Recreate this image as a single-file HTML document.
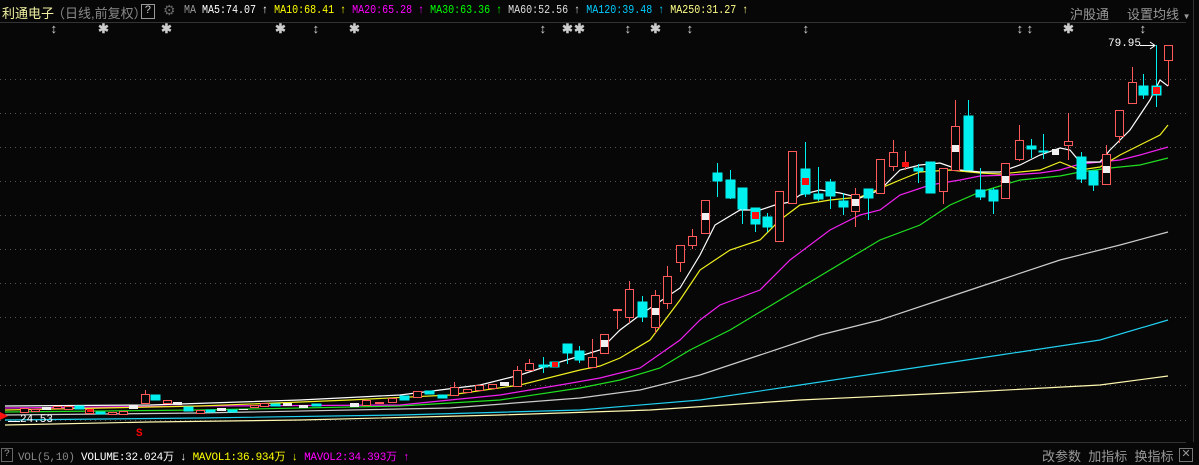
<!DOCTYPE html>
<html><head><meta charset="utf-8"><style>
body{margin:0;background:#070707;width:1199px;height:463px;overflow:hidden;position:relative;font-family:"Liberation Mono","Noto Sans CJK SC",monospace;}
.t{position:absolute;white-space:nowrap;font-size:12px;}
</style></head><body>
<svg width="1199" height="463" style="position:absolute;left:0;top:0" shape-rendering="crispEdges">
<line x1="0" y1="22.5" x2="1186" y2="22.5" stroke="#333"/>
<line x1="1193.5" y1="0" x2="1193.5" y2="442" stroke="#333"/>
<line x1="0" y1="442.5" x2="1186" y2="442.5" stroke="#333"/>
<g stroke="#555" stroke-dasharray="1,4">
<line x1="0" y1="79.5" x2="1190" y2="79.5"/><line x1="0" y1="113.5" x2="1190" y2="113.5"/><line x1="0" y1="147.5" x2="1190" y2="147.5"/><line x1="0" y1="181.5" x2="1190" y2="181.5"/><line x1="0" y1="215.5" x2="1190" y2="215.5"/><line x1="0" y1="249.5" x2="1190" y2="249.5"/><line x1="0" y1="283.5" x2="1190" y2="283.5"/><line x1="0" y1="317.5" x2="1190" y2="317.5"/><line x1="0" y1="351.5" x2="1190" y2="351.5"/><line x1="0" y1="385.5" x2="1190" y2="385.5"/><line x1="0" y1="420.5" x2="1190" y2="420.5"/>
</g>
<g fill="none" stroke-width="1.2" shape-rendering="auto">
<polyline stroke="#fff8b0" points="5,425 150,422 300,420 500,415 650,410 800,400 950,393 1100,385 1168,376"/>
<polyline stroke="#20d0f0" points="5,420 200,418 400,415 580,410 700,400 800,385 900,370 1000,355 1100,340 1168,320"/>
<polyline stroke="#ccc" points="5,415 200,413 450,408 580,398 640,390 700,375 760,355 820,335 880,320 940,300 1000,280 1060,260 1120,245 1168,232"/>
<polyline stroke="#20e020" points="5,412 200,410 400,406 500,400 580,388 620,380 660,368 690,350 730,330 780,300 830,270 880,240 920,225 950,205 980,192 1020,180 1060,176 1080,172 1110,168 1140,165 1168,158"/>
<polyline stroke="#f020f0" points="5,408 200,406 400,405 500,395 560,385 600,378 640,368 680,340 700,320 720,305 760,290 790,260 830,230 860,215 880,210 900,195 930,185 960,180 980,176 1010,175 1040,173 1060,170 1080,164 1120,160 1140,155 1168,147"/>
<polyline stroke="#f0f020" points="5,410 200,406 350,400 450,395 520,385 580,370 600,366 620,358 650,340 680,300 700,270 730,250 760,240 780,220 800,205 830,200 860,197 900,180 920,172 950,170 980,173 1000,174 1040,170 1060,162 1080,170 1100,167 1120,155 1140,145 1160,135 1168,125"/>
<polyline stroke="#fff" points="5,406 150,405 300,400 400,395 480,385 520,375 560,362 600,350 620,330 640,315 680,288 700,255 715,225 740,210 760,210 775,205 790,202 800,195 820,190 840,193 860,198 880,190 900,170 920,165 940,163 960,170 980,172 1000,172 1020,165 1040,155 1060,148 1070,150 1080,162 1100,162 1110,150 1130,130 1150,100 1160,80 1168,86"/>
</g>
<g stroke="#ff5a5a" fill="#070707">
<line x1="592.5" y1="339" x2="592.5" y2="367"/><rect x="588.5" y="357.5" width="8" height="10"/>
<line x1="604.5" y1="334" x2="604.5" y2="353"/><rect x="600.5" y="334.5" width="8" height="19"/>
<line x1="617.5" y1="310" x2="617.5" y2="329"/><rect x="613.5" y="309.5" width="8" height="1"/>
<line x1="629.5" y1="281" x2="629.5" y2="323"/><rect x="625.5" y="289.5" width="8" height="28"/>
<line x1="655.5" y1="290" x2="655.5" y2="333"/><rect x="651.5" y="295.5" width="8" height="32"/>
<line x1="667.5" y1="266" x2="667.5" y2="309"/><rect x="663.5" y="276.5" width="8" height="27"/>
<line x1="680.5" y1="245" x2="680.5" y2="272"/><rect x="676.5" y="245.5" width="8" height="17"/>
<line x1="692.5" y1="229" x2="692.5" y2="249"/><rect x="688.5" y="236.5" width="8" height="9"/>
<line x1="705.5" y1="200" x2="705.5" y2="233"/><rect x="701.5" y="200.5" width="8" height="33"/>
<rect x="775.5" y="191.5" width="8" height="50"/>
<rect x="788.5" y="151.5" width="8" height="52"/>
<line x1="855.5" y1="188" x2="855.5" y2="227"/><rect x="851.5" y="194.5" width="8" height="17"/>
<rect x="876.5" y="159.5" width="8" height="34"/>
<line x1="893.5" y1="140" x2="893.5" y2="171"/><rect x="889.5" y="152.5" width="8" height="14"/>
<line x1="905.5" y1="151" x2="905.5" y2="170"/>
<line x1="943.5" y1="168" x2="943.5" y2="204"/><rect x="939.5" y="168.5" width="8" height="23"/>
<line x1="955.5" y1="100" x2="955.5" y2="170"/><rect x="951.5" y="126.5" width="8" height="44"/>
<rect x="1001.5" y="163.5" width="8" height="35"/>
<line x1="1019.5" y1="125" x2="1019.5" y2="161"/><rect x="1015.5" y="140.5" width="8" height="19"/>
<line x1="1068.5" y1="113" x2="1068.5" y2="160"/><rect x="1064.5" y="141.5" width="8" height="4"/>
<line x1="1106.5" y1="145" x2="1106.5" y2="184"/><rect x="1102.5" y="154.5" width="8" height="30"/>
<line x1="1119.5" y1="110" x2="1119.5" y2="143"/><rect x="1115.5" y="110.5" width="8" height="26"/>
<line x1="1132.5" y1="67" x2="1132.5" y2="103"/><rect x="1128.5" y="82.5" width="8" height="21"/>
<line x1="1168.5" y1="45" x2="1168.5" y2="86"/><rect x="1164.5" y="45.5" width="8" height="15"/>
<rect x="20.5" y="408.5" width="8" height="4"/><rect x="31.5" y="409.5" width="8" height="2"/><rect x="53.5" y="406.5" width="8" height="2"/><rect x="64.5" y="406.5" width="8" height="3"/><rect x="85.5" y="409.5" width="8" height="4"/><rect x="108.5" y="412.5" width="8" height="2"/><rect x="119.5" y="411.5" width="8" height="3"/>
<line x1="145.5" y1="390" x2="145.5" y2="404"/><rect x="141.5" y="394.5" width="8" height="9"/>
<rect x="163.5" y="400.5" width="8" height="3"/><rect x="196.5" y="410.5" width="8" height="3"/><rect x="250.5" y="405.5" width="8" height="2"/><rect x="260.5" y="403.5" width="8" height="3"/>
<rect x="362.5" y="400.5" width="8" height="5"/><rect x="375.5" y="402.5" width="8" height="1"/><rect x="388.5" y="398.5" width="8" height="4"/><rect x="413.5" y="391.5" width="8" height="6"/>
<line x1="454.5" y1="382" x2="454.5" y2="395"/><rect x="450.5" y="387.5" width="8" height="8"/>
<rect x="463.5" y="389.5" width="8" height="3"/><rect x="475.5" y="385.5" width="8" height="5"/><rect x="488.5" y="384.5" width="8" height="4"/>
<line x1="517.5" y1="366" x2="517.5" y2="386"/><rect x="513.5" y="370.5" width="8" height="16"/>
<line x1="529.5" y1="359" x2="529.5" y2="370"/><rect x="525.5" y="363.5" width="8" height="7"/>
</g>
<g fill="#00f0f0" stroke="#00f0f0">
<line x1="642.5" y1="296" x2="642.5" y2="322"/><rect x="638" y="302" width="9" height="15"/>
<line x1="717.5" y1="163" x2="717.5" y2="197"/><rect x="713" y="173" width="9" height="8"/>
<line x1="730.5" y1="170" x2="730.5" y2="199"/><rect x="726" y="180" width="9" height="18"/>
<line x1="742.5" y1="188" x2="742.5" y2="224"/><rect x="738" y="188" width="9" height="21"/>
<line x1="755.5" y1="208" x2="755.5" y2="232"/><rect x="751" y="208" width="9" height="16"/>
<line x1="767.5" y1="213" x2="767.5" y2="232"/><rect x="763" y="217" width="9" height="10"/>
<line x1="805.5" y1="142" x2="805.5" y2="197"/><rect x="801" y="169" width="9" height="25"/>
<line x1="818.5" y1="167" x2="818.5" y2="201"/><rect x="814" y="194" width="9" height="5"/>
<line x1="830.5" y1="179" x2="830.5" y2="209"/><rect x="826" y="182" width="9" height="14"/>
<line x1="843.5" y1="193" x2="843.5" y2="215"/><rect x="839" y="201" width="9" height="6"/>
<line x1="868.5" y1="189" x2="868.5" y2="220"/><rect x="864" y="189" width="9" height="9"/>
<line x1="918.5" y1="164" x2="918.5" y2="183"/><rect x="914" y="168" width="9" height="3"/>
<rect x="926" y="162" width="9" height="31"/>
<line x1="968.5" y1="100" x2="968.5" y2="170"/><rect x="964" y="116" width="9" height="54"/>
<line x1="980.5" y1="168" x2="980.5" y2="200"/><rect x="976" y="190" width="9" height="7"/>
<line x1="993.5" y1="188" x2="993.5" y2="214"/><rect x="989" y="190" width="9" height="11"/>
<line x1="1031.5" y1="139" x2="1031.5" y2="158"/><rect x="1027" y="146" width="9" height="3"/>
<line x1="1043.5" y1="134" x2="1043.5" y2="159"/><rect x="1039" y="151" width="9" height="1"/>
<line x1="1081.5" y1="152" x2="1081.5" y2="183"/><rect x="1077" y="157" width="9" height="22"/>
<line x1="1093.5" y1="171" x2="1093.5" y2="191"/><rect x="1089" y="171" width="9" height="14"/>
<line x1="1143.5" y1="74" x2="1143.5" y2="99"/><rect x="1139" y="86" width="9" height="9"/>
<line x1="1156.5" y1="45" x2="1156.5" y2="107"/><rect x="1152" y="86" width="9" height="9"/>
<rect x="75" y="406" width="9" height="3"/><rect x="96" y="412" width="9" height="2"/><rect x="151" y="395" width="9" height="5"/><rect x="184" y="407" width="9" height="4"/><rect x="206" y="410" width="9" height="2"/><rect x="228" y="410" width="9" height="2"/><rect x="271" y="404" width="9" height="2"/><rect x="312" y="404" width="9" height="2"/><rect x="400" y="396" width="9" height="4"/><rect x="425" y="391" width="9" height="3"/><rect x="438" y="395" width="9" height="3"/>
<line x1="543.5" y1="357" x2="543.5" y2="373"/><rect x="539" y="365" width="9" height="2"/>
<rect x="550" y="362" width="9" height="5"/>
<line x1="567.5" y1="344" x2="567.5" y2="364"/><rect x="563" y="344" width="9" height="9"/>
<line x1="579.5" y1="346" x2="579.5" y2="363"/><rect x="575" y="351" width="9" height="9"/>
</g>
<g fill="#f0f0f0">
<rect x="601" y="340" width="7" height="7"/><rect x="652" y="308" width="7" height="7"/><rect x="702" y="213" width="7" height="7"/><rect x="852" y="199" width="7" height="7"/><rect x="952" y="145" width="7" height="7"/><rect x="1002" y="176" width="7" height="7"/><rect x="1103" y="166" width="7" height="7"/><rect x="1052" y="149" width="7" height="6"/>
<rect x="42" y="407" width="9" height="3"/><rect x="129" y="405" width="9" height="4"/><rect x="173" y="402" width="9" height="3"/><rect x="217" y="408" width="9" height="3"/><rect x="239" y="409" width="9" height="1"/><rect x="283" y="403" width="9" height="3"/><rect x="299" y="405" width="9" height="3"/><rect x="350" y="403" width="9" height="4"/><rect x="500" y="382" width="9" height="4"/>
</g>
<g fill="#ff1010">
<rect x="752" y="212" width="7" height="7"/><rect x="802" y="178" width="7" height="7"/><rect x="902" y="162" width="7" height="5"/><rect x="1153" y="87" width="7" height="7"/><rect x="552" y="362" width="6" height="5"/><rect x="87" y="409" width="6" height="3"/>
<polygon points="0,412 8,416 0,420"/>
</g>
<line x1="1140" y1="45.5" x2="1154" y2="45.5" stroke="#fff"/>
<polyline points="1150,42 1155,45.5 1150,49" fill="none" stroke="#fff" shape-rendering="auto"/>
<line x1="8" y1="421.5" x2="20" y2="421.5" stroke="#fff"/>
</svg>
<div class="t" style="left:2px;top:3px;font-size:13px;color:#f0f0a0;font-family:'Liberation Sans','Noto Sans CJK SC',sans-serif">利通电子</div>
<div class="t" style="left:52px;top:3px;font-size:13px;color:#888;font-family:'Liberation Sans','Noto Sans CJK SC',sans-serif">（日线,前复权）</div>
<div class="t" style="left:141px;top:4px;width:12px;height:13px;border:1px solid #999;color:#ccc;text-align:center;line-height:13px;font-size:11px">?</div>
<div class="t" style="left:163px;top:3px;color:#666;font-size:14px">⚙</div>
<div class="t" style="left:184px;top:4px;font-size:10px;line-height:14px;transform:scaleY(1.15);transform-origin:top left"><span style="color:#999">MA</span> <span style="color:#fff">MA5:74.07 ↑</span> <span style="color:#ff0">MA10:68.41 ↑</span> <span style="color:#f0f">MA20:65.28 ↑</span> <span style="color:#0f0">MA30:63.36 ↑</span> <span style="color:#ddd">MA60:52.56 ↑</span> <span style="color:#0cf">MA120:39.48 ↑</span> <span style="color:#ff8">MA250:31.27 ↑</span></div>
<div class="t" style="left:1070px;top:4px;font-size:13px;color:#999;font-family:'Liberation Sans','Noto Sans CJK SC',sans-serif">沪股通</div>
<div class="t" style="left:1127px;top:4px;font-size:13px;color:#999;font-family:'Liberation Sans','Noto Sans CJK SC',sans-serif">设置均线 <span style="font-size:8px">▼</span></div>
<div class="t" style="left:0;top:22px;color:#ccc;font-size:13px;font-weight:bold;width:1199px;height:16px">
<span style="position:absolute;left:50px">↕</span><span style="position:absolute;left:98px">✱</span><span style="position:absolute;left:161px">✱</span><span style="position:absolute;left:275px">✱</span><span style="position:absolute;left:312px">↕</span><span style="position:absolute;left:349px">✱</span><span style="position:absolute;left:539px">↕</span><span style="position:absolute;left:562px">✱</span><span style="position:absolute;left:574px">✱</span><span style="position:absolute;left:624px">↕</span><span style="position:absolute;left:650px">✱</span><span style="position:absolute;left:686px">↕</span><span style="position:absolute;left:802px">↕</span><span style="position:absolute;left:1016px">↕</span><span style="position:absolute;left:1026px">↕</span><span style="position:absolute;left:1063px">✱</span><span style="position:absolute;left:1139px">↕</span>
</div>
<div class="t" style="left:1108px;top:38px;color:#fff;font-size:11px">79.95</div>
<div class="t" style="left:20px;top:414px;color:#fff;font-size:11px">24.53</div>
<div class="t" style="left:136px;top:428px;color:#f00;font-size:11px;font-weight:bold">S</div>
<div class="t" style="left:1px;top:448px;width:10px;height:12px;border:1px solid #666;color:#999;font-size:10px;line-height:12px;text-align:center">?</div>
<div class="t" style="left:18px;top:448px;font-size:11px;letter-spacing:-0.3px"><span style="color:#888">VOL(5,10)</span> <span style="color:#fff">VOLUME:32.024万 ↓</span> <span style="color:#ff0">MAVOL1:36.934万 ↓</span> <span style="color:#f0f">MAVOL2:34.393万 ↑</span></div>
<div class="t" style="left:1042px;top:446px;font-size:13px;color:#999;font-family:'Liberation Sans','Noto Sans CJK SC',sans-serif">改参数&nbsp;&nbsp;加指标&nbsp;&nbsp;换指标</div>
<div class="t" style="left:1179px;top:448px;width:12px;height:12px;border:1px solid #777;color:#999;font-size:11px;line-height:12px;text-align:center">✕</div>
</body></html>
